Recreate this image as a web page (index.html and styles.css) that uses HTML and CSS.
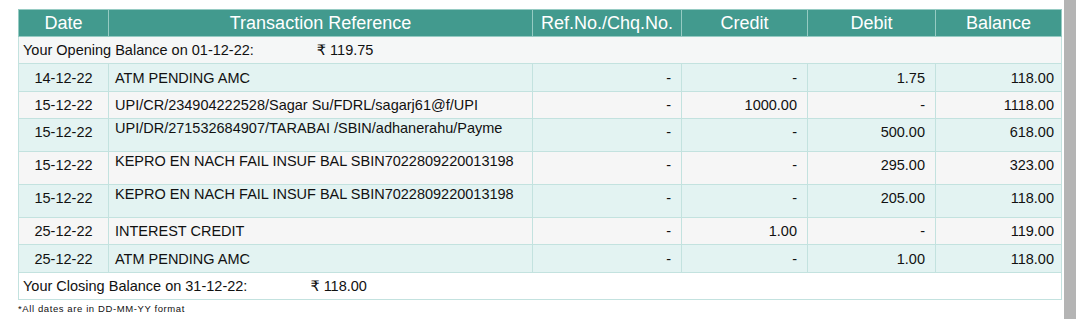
FILE: index.html
```html
<!DOCTYPE html>
<html>
<head>
<meta charset="utf-8">
<link rel="stylesheet" href="styles.css">
</head>
<body>
<div class="frame">
  <div class="page">
    <table class="stmt">
      <colgroup>
        <col class="c-date"><col class="c-ref"><col class="c-chq"><col class="c-cr"><col class="c-dr"><col class="c-bal">
      </colgroup>
      <thead>
        <tr>
          <th>Date</th><th>Transaction Reference</th><th>Ref.No./Chq.No.</th><th>Credit</th><th>Debit</th><th>Balance</th>
        </tr>
      </thead>
      <tbody>
        <tr class="summary open">
          <td colspan="6"><span class="lbl">Your Opening Balance on 01-12-22:</span><span class="amt">₹ 119.75</span></td>
        </tr>
        <tr class="teal h28">
          <td class="date">14-12-22</td><td class="desc">ATM PENDING AMC</td><td class="num">-</td><td class="num">-</td><td class="num">1.75</td><td class="num bal">118.00</td>
        </tr>
        <tr class="grey">
          <td class="date">15-12-22</td><td class="desc">UPI/CR/234904222528/Sagar Su/FDRL/sagarj61@f/UPI</td><td class="num">-</td><td class="num">1000.00</td><td class="num">-</td><td class="num bal">1118.00</td>
        </tr>
        <tr class="teal tall">
          <td class="date">15-12-22</td><td class="desc">UPI/DR/271532684907/TARABAI /SBIN/adhanerahu/Payme</td><td class="num">-</td><td class="num">-</td><td class="num">500.00</td><td class="num bal">618.00</td>
        </tr>
        <tr class="grey tall">
          <td class="date">15-12-22</td><td class="desc">KEPRO EN NACH FAIL INSUF BAL SBIN7022809220013198</td><td class="num">-</td><td class="num">-</td><td class="num">295.00</td><td class="num bal">323.00</td>
        </tr>
        <tr class="teal tall">
          <td class="date">15-12-22</td><td class="desc">KEPRO EN NACH FAIL INSUF BAL SBIN7022809220013198</td><td class="num">-</td><td class="num">-</td><td class="num">205.00</td><td class="num bal">118.00</td>
        </tr>
        <tr class="grey">
          <td class="date">25-12-22</td><td class="desc">INTEREST CREDIT</td><td class="num">-</td><td class="num">1.00</td><td class="num">-</td><td class="num bal">119.00</td>
        </tr>
        <tr class="teal h28">
          <td class="date">25-12-22</td><td class="desc">ATM PENDING AMC</td><td class="num">-</td><td class="num">-</td><td class="num">1.00</td><td class="num bal">118.00</td>
        </tr>
        <tr class="summary close">
          <td colspan="6"><span class="lbl">Your Closing Balance on 31-12-22:</span><span class="amt">₹ 118.00</span></td>
        </tr>
      </tbody>
    </table>
    <p class="note">*All dates are in DD-MM-YY format</p>
  </div>
  <div class="edge"></div>
</div>
</body>
</html>
```

FILE: styles.css
```css
html, body {
  margin: 0;
  padding: 0;
  background: #ffffff;
}

body {
  font-family: "Liberation Sans", "DejaVu Sans", "Noto Sans", sans-serif;
  color: #111111;
}

.frame {
  display: flex;
  height: 319px;
  overflow: hidden;
}

.page {
  flex: 0 0 1063px;
  box-sizing: border-box;
  padding: 9px 2px 0 18px;
}

.edge {
  flex: 0 0 12px;
  background: #b4b4b4;
}

.stmt {
  width: 1043px;
  table-layout: fixed;
  border-collapse: collapse;
}

.c-date { width: 90px; }
.c-ref { width: 424px; }
.c-chq { width: 149px; }
.c-cr { width: 126px; }
.c-dr { width: 128px; }
.c-bal { width: 126px; }

.stmt th {
  background: #429a8e;
  color: #ffffff;
  font-weight: normal;
  font-size: 18px;
  height: 27px;
  padding: 0;
  border: 1px solid #96cbc3;
  text-align: center;
  vertical-align: middle;
  box-sizing: border-box;
}

.stmt td {
  font-size: 14.5px;
  height: 27px;
  padding: 0;
  border: 1px solid #c3e2df;
  vertical-align: middle;
  white-space: nowrap;
  overflow: hidden;
  box-sizing: border-box;
}

.stmt tr.h28 td {
  height: 28px;
}

.stmt tr.tall td {
  height: 33px;
  padding-bottom: 6px;
}

.stmt tr.tall td.desc {
  vertical-align: top;
  padding-top: 1px;
  padding-bottom: 0;
}

.teal td {
  background: #e3f3f2;
}

.grey td {
  background: #f6f6f6;
}

.date {
  text-align: center;
}

.desc {
  padding-left: 6px !important;
}

.num {
  text-align: right;
  padding-right: 10px !important;
}

.num.bal {
  padding-right: 7px !important;
}

.summary td {
  padding-left: 4px !important;
}

.summary.open td {
  background: #f5f7f7;
}

.summary.close td {
  background: #ffffff;
}

.lbl {
  display: inline-block;
}

.amt {
  display: inline-block;
  margin-left: 63px;
}

.note {
  margin: 3px 0 0 0;
  font-size: 9.5px;
  letter-spacing: 0.6px;
  color: #111111;
}
```
